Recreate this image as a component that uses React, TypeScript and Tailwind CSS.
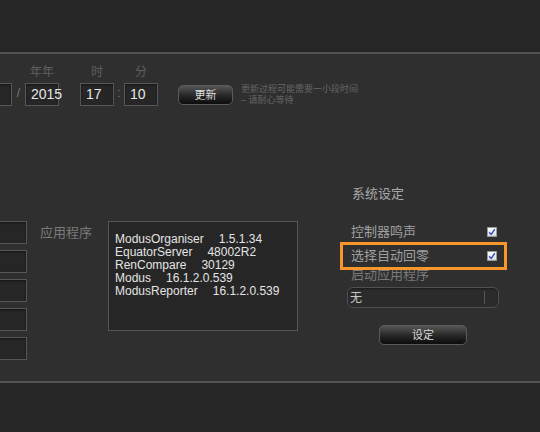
import React from "react";

const font = "font-['Liberation_Sans','Noto_Sans_CJK_SC',sans-serif]";

const apps = [
  ["ModusOrganiser", "1.5.1.34"],
  ["EquatorServer", "48002R2"],
  ["RenCompare", "30129"],
  ["Modus", "16.1.2.0.539"],
  ["ModusReporter", "16.1.2.0.539"],
];

function Field({ value, className = "" }: { value?: string; className?: string }) {
  return (
    <div
      className={`h-[23px] border border-[#575757] bg-[#262626] pl-[5px] text-[14px] leading-[21px] text-[#e6e6e6] shadow-[inset_0_1px_2px_rgba(0,0,0,0.5)] ${className}`}
    >
      {value}
    </div>
  );
}

function DarkButton({ label, className = "" }: { label: string; className?: string }) {
  return (
    <button
      className={`h-[20px] rounded-[5px] border border-[#5a5a5a] bg-gradient-to-b from-[#575757] via-[#2a2a2a] to-[#0c0c0c] text-[11px] leading-[18px] text-[#dcdcdc] ${className}`}
    >
      {label}
    </button>
  );
}

function Check() {
  return (
    <span className="flex h-[10px] w-[10px] items-center justify-center border border-[#9a9a9a] bg-gradient-to-b from-[#ffffff] to-[#d8dbe2]">
      <svg width="8" height="8" viewBox="0 0 8 8" fill="none">
        <path d="M1.2 4.2 3.2 6.4 6.9 1.2" stroke="#2f4fb8" strokeWidth="1.4" />
      </svg>
    </span>
  );
}

export default function App() {
  return (
    <div className={`h-[432px] w-[540px] overflow-hidden bg-[#262626] ${font}`}>
      <div className="h-[52px]" />
      <div className="h-[331px] overflow-hidden border-y-2 border-[#525252] bg-[#2f2f2f]">
        {/* date / time row */}
        <div className="flex items-end pt-[10px]">
          <div className="-ml-[22px] flex w-[34px] flex-col">
            <Field />
          </div>
          <span className="mb-[4px] w-[13px] text-center text-[12px] text-[#777]">/</span>
          <div className="flex w-[34px] flex-col items-center">
            <span className="mb-[3px] text-[12px] leading-[16px] text-[#5f5f5f]">年年</span>
            <Field value="2015" className="w-full" />
          </div>
          <div className="ml-[21px] flex w-[34px] flex-col items-center">
            <span className="mb-[3px] text-[12px] leading-[16px] text-[#5f5f5f]">时</span>
            <Field value="17" className="w-full" />
          </div>
          <span className="mb-[4px] w-[10px] text-center text-[12px] text-[#777]">:</span>
          <div className="flex w-[34px] flex-col items-center">
            <span className="mb-[3px] text-[12px] leading-[16px] text-[#5f5f5f]">分</span>
            <Field value="10" className="w-full" />
          </div>
          <DarkButton label="更新" className="mb-[1px] ml-[20px] w-[55px]" />
          <div className="ml-[8px] text-[9px] leading-[11px] text-[#666]">
            <div>更新过程可能需要一小段时间</div>
            <div>– 请耐心等待</div>
          </div>
        </div>

        {/* lower section */}
        <div className="mt-[78px] flex">
          <div className="flex pt-[37px]">
            <div className="-ml-[20px] flex w-[47px] flex-col gap-[6px]">
              <Field />
              <Field />
              <Field />
              <Field />
              <Field />
            </div>
            <span className="ml-[13px] w-[68px] pt-[3px] text-[13px] leading-[18px] text-[#7a7a7a]">应用程序</span>
            <div className="h-[110px] w-[190px] border border-[#575757] bg-[#262626] pl-[6px] pt-[11px] text-[12px] leading-[13px] text-[#e4e4e4]">
              {apps.map(([name, ver]) => (
                <div key={name} className="whitespace-nowrap">
                  {name}
                  <span className="ml-[15px]">{ver}</span>
                </div>
              ))}
            </div>
          </div>

          {/* system settings */}
          <div className="relative ml-[49px] flex w-[152px] flex-col">
            <span className="pl-[5px] text-[13px] leading-[20px] text-[#a8a8a8]">系统设定</span>
            <div className="mt-[18px] flex h-[20px] items-center justify-between pl-[4px] pr-[2px]">
              <span className="text-[13px] text-[#a0a0a0]">控制器鸣声</span>
              <Check />
            </div>
            <div className="mt-[4px] flex h-[20px] items-center justify-between pl-[4px] pr-[2px]">
              <span className="text-[13px] text-[#a0a0a0]">选择自动回零</span>
              <Check />
            </div>
            <span className="h-[18px] pl-[4px] text-[13px] leading-[18px] text-[#7a7a7a]">启动应用程序</span>
            <div className="mt-[3px] flex h-[21px] items-center rounded-[6px] border border-[#505050] bg-[#2b2b2b] pl-[2px] pr-[13px] shadow-[inset_0_1px_2px_rgba(0,0,0,0.4)]">
              <span className="flex-1 text-[12px] text-[#c8c8c8]">无</span>
              <span className="h-[13px] w-px bg-[#555]" />
            </div>
            <DarkButton label="设定" className="mx-auto mt-[17px] w-[88px]" />

            {/* highlight frame around the auto-home row */}
            <div className="absolute left-[-7px] top-[58px] h-[28px] w-[167px] border-[3px] border-[#f7962a]" />
          </div>
        </div>
      </div>
    </div>
  );
}
